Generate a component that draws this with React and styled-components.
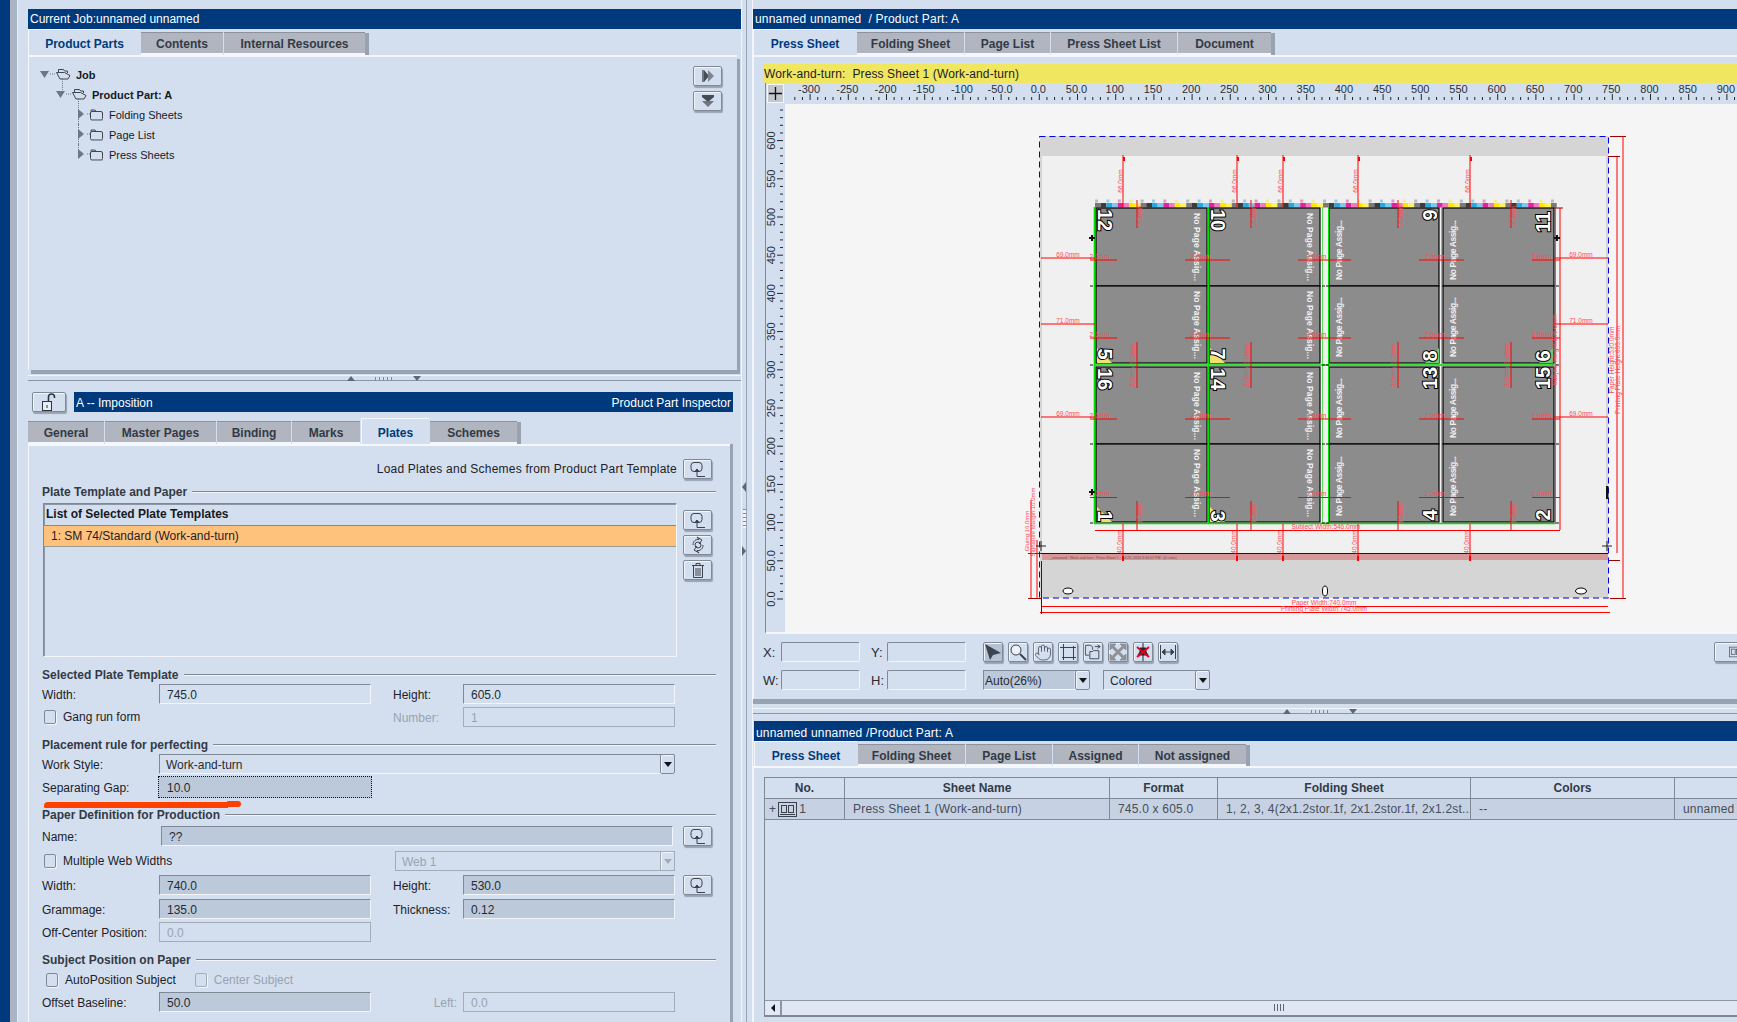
import React from 'react';
import styled, { createGlobalStyle } from 'styled-components';
import { Hand } from 'lucide-react';

const Global = createGlobalStyle`
  html, body { margin: 0; padding: 0; background: #d3dfef; }
  body { font-family: "Liberation Sans", Arial, sans-serif; font-size: 12px; color: #1c2129; }
`;

const Root = styled.div`
  display: flex;
  width: 1737px;
  height: 1022px;
  overflow: hidden;
  background: #d3dfef;
`;
const NavyStrip = styled.div`
  flex: 0 0 10px;
  background: #003a7d;
`;
const GreyStrip = styled.div`
  flex: 0 0 8px;
  box-sizing: border-box;
  background: #aab4c2;
  border-right: 1px solid #e6edf6;
`;
const LeftCol = styled.div`
  flex: 0 0 713px;
  margin-left: 10px;
  padding-top: 9px;
  display: flex;
  flex-direction: column;
`;
const VSplit = styled.div`
  flex: 0 0 12px;
  box-sizing: border-box;
  border-left: 1px solid #f2f6fb;
  border-right: 1px solid #f2f6fb;
  position: relative;
  background: linear-gradient(to right, transparent 4px, #9aa3b0 4px, #9aa3b0 5px, transparent 5px);
`;
const VArrow = styled.div`
  position: absolute;
  left: 0;
  top: ${p => p.$top}px;
  width: 0;
  height: 0;
  border-top: 5px solid transparent;
  border-bottom: 5px solid transparent;
  ${p => p.$right ? 'border-left: 4px solid #5e6875;' : 'border-right: 4px solid #5e6875;'}
`;
const VDots = styled.div`
  position: absolute;
  left: 1px;
  top: 509px;
  width: 3px;
  height: 19px;
  background: repeating-linear-gradient(to bottom, #7f8894 0 1px, #f2f6fb 1px 4px);
`;
const RightCol = styled.div`
  flex: 1;
  min-width: 0;
  padding-top: 9px;
  display: flex;
  flex-direction: column;
`;
const TitleBar = styled.div`
  height: 20px;
  line-height: ${p => p.$lh || 21}px;
  background: #003a7d;
  color: #fff;
  padding: 0 2px;
  flex: ${p => p.$grow ? 1 : 'none'};
  display: flex;
  justify-content: space-between;
  white-space: pre;
  letter-spacing: ${p => p.$ls || 0}px;
  margin-top: ${p => p.$mt || 0}px;
  margin-left: ${p => p.$ml || 0}px;
`;
const TabStrip = styled.div`
  display: flex;
  align-items: flex-end;
  gap: 1px;
  height: ${p => p.$h || 26}px;
  margin-left: ${p => p.$ml || 0}px;
  flex: none;
`;
const Tab = styled.div`
  box-sizing: border-box;
  width: ${p => p.$w}px;
  height: ${p => p.$on ? (p.$short ? 25 : 26) : (p.$short ? 22 : 23)}px;
  line-height: ${p => p.$on ? 28 : 22}px;
  text-align: center;
  font-weight: bold;
  color: ${p => p.$on ? '#003a7d' : '#333a45'};
  background: ${p => p.$on ? '#d3dfef' : '#b0b5bf'};
  border-top: 1px solid ${p => p.$on ? '#f4f7fb' : '#8d939e'};
  ${p => p.$on ? 'border-left: 1px solid #f4f7fb;' : 'border-bottom: 2px solid #f4f7fb;'}
  ${p => p.$last && 'box-shadow: 4px 1px 0 #98a2b0;'}
`;
const Card = styled.div`
  box-sizing: border-box;
  height: ${p => p.$h}px;
  flex: ${p => p.$grow ? 1 : 'none'};
  background: #d3dfef;
  border-top: 2px solid #f4f7fb;
  border-left: 1px solid #f4f7fb;
  margin-right: ${p => p.$mr || 0}px;
  box-shadow: ${p => p.$shadow || '3px 4px 0 #98a2b0'};
  position: relative;
`;
const TreeBox = styled.div`
  padding-top: 7px;
`;
const TreeRow = styled.div`
  display: flex;
  align-items: center;
  height: 20px;
  padding-left: ${p => p.$pad}px;
  font-weight: ${p => p.$bold ? 'bold' : 'normal'};
  font-size: 11px;
  color: #16191f;
  position: relative;
  &::before {
    content: ${p => p.$stem ? '""' : 'none'};
    position: absolute;
    left: ${p => p.$stem}px;
    top: ${p => p.$stemTop ?? -6}px;
    height: ${p => p.$stemH || 20}px;
    border-left: 1px dotted #6f7884;
  }
`;
const TreeLabel = styled.span`
  margin-left: 5px;
  padding-top: 1px;
`;
const SideButtons = styled.div`
  position: absolute;
  right: 15px;
  top: 9px;
  display: flex;
  flex-direction: column;
  gap: 5px;
`;
const IconBtn = styled.button`
  box-sizing: border-box;
  flex: none;
  width: ${p => p.$w || 29}px;
  height: ${p => p.$h || 20}px;
  margin: 0 0 0 ${p => p.$ml || 0}px;
  padding: 0;
  display: flex;
  align-items: center;
  justify-content: center;
  grid-column: ${p => p.$col || 'auto'};
  background: ${p => p.$pressed ? '#b5c2d4' : '#d3dfef'};
  border: 1px solid #808a97;
  border-radius: 2px;
  box-shadow: inset 1px 1px 0 #f2f6fb, 1px 2px 1px #98a2b0;
  color: #3b424c;
`;
const HSplit = styled.div`
  box-sizing: border-box;
  height: 6px;
  margin-top: ${p => p.$mt || 0}px;
  flex: none;
  border-top: 1px solid #f2f6fb;
  border-bottom: 1px solid #8d97a4;
  display: flex;
  align-items: center;
  padding-left: ${p => p.$left}px;
`;
const SplitArrow = styled.span`
  width: 0;
  height: 0;
  border-left: 4px solid transparent;
  border-right: 4px solid transparent;
  ${p => p.$down ? 'border-top: 5px solid #5e6875;' : 'border-bottom: 5px solid #5e6875;'}
`;
const SplitDots = styled.span`
  width: 18px;
  height: 3px;
  margin: 0 20px;
  background: repeating-linear-gradient(to right, #7f8894 0 1px, transparent 1px 4px);
`;
const InspectorHead = styled.div`
  display: flex;
  gap: 8px;
  margin: 11px 8px 0 4px;
  flex: none;
`;
const FormCard = styled(Card)`
  margin-right: 11px;
  padding-left: 13px;
`;
const LoadRow = styled.div`
  display: flex;
  justify-content: flex-end;
  align-items: center;
  gap: 6px;
  margin: 13px 18px 0 0;
  height: 20px;
  line-height: 22px;
  letter-spacing: .22px;
`;
const Heading = styled.div`
  box-sizing: border-box;
  display: flex;
  align-items: center;
  gap: 5px;
  height: 16px;
  padding-top: 2px;
  margin: ${p => p.$mt}px 14px 0 0;
  font-weight: bold;
  color: #333a45;
  white-space: nowrap;
  &::after {
    content: "";
    flex: 1;
    height: 0;
    border-top: 1px solid #7f8894;
    border-bottom: 1px solid #f2f6fb;
  }
`;
const ListArea = styled.div`
  display: flex;
  margin-top: 4px;
  height: 154px;
`;
const PlateList = styled.div`
  box-sizing: border-box;
  width: 634px;
  margin-left: 1px;
  border: 1px solid #f2f6fb;
  border-top: 1px solid #808a97;
  border-left: 1px solid #808a97;
  box-shadow: inset 1px 1px 0 #8d97a4;
`;
const ListHead = styled.div`
  height: 21px;
  line-height: 21px;
  padding-left: 2px;
  font-weight: bold;
  color: #16191f;
  border-bottom: 1px solid #808a97;
`;
const ListItem = styled.div`
  height: 20px;
  line-height: 20px;
  padding-left: 7px;
  background: #ffc27c;
  border-bottom: 1px solid #9a9a90;
`;
const ListTools = styled.div`
  display: flex;
  flex-direction: column;
  gap: 5px;
  margin: 7px 0 0 6px;
`;
const FormGrid = styled.div`
  display: grid;
  grid-template-columns: 117px 212px 22px 70px 212px 8px 29px;
  align-items: center;
  height: ${p => p.$h || 20}px;
  margin-top: ${p => p.$mt || 0}px;
`;
const Label = styled.span`
  color: ${p => p.$off ? '#98a3b1' : '#1c2129'};
  grid-column: ${p => p.$col || 'auto'};
  white-space: nowrap;
  text-align: ${p => p.$end ? 'right' : 'left'};
  padding-right: ${p => p.$end ? 6 : 0}px;
  padding-top: 1px;
`;
const Field = styled.div`
  box-sizing: border-box;
  height: 20px;
  line-height: 21px;
  padding-left: 7px;
  grid-column: ${p => p.$col || 'auto'};
  margin: 0 ${p => p.$inset || 0}px;
  background: ${p => p.$fill ? '#bcc9da' : '#d3dfef'};
  color: ${p => p.$off ? '#98a3b1' : '#262b33'};
  border: 1px solid ${p => p.$off ? '#a3adba' : '#f2f6fb'};
  ${p => !p.$off && 'border-top-color: #808a97; border-left-color: #808a97;'}
`;
const FocusField = styled(Field)`
  height: 22px;
  margin: 0 -1px;
  padding-left: 8px;
  line-height: 23px;
  border: 1px dotted #10131a;
`;
const Select = styled.div`
  box-sizing: border-box;
  display: flex;
  justify-content: space-between;
  height: 20px;
  line-height: 21px;
  padding-left: ${p => p.$pad ?? 6}px;
  grid-column: ${p => p.$col || 'auto'};
  color: ${p => p.$off ? '#98a3b1' : '#262b33'};
  background: ${p => p.$fill ? `linear-gradient(to right, #bcc9da calc(100% - 15px), #d3dfef 0)` : '#d3dfef'};
  width: ${p => p.$w ? p.$w + 'px' : 'auto'};
  margin-left: ${p => p.$ml || 0}px;
  border: 1px solid ${p => p.$off ? '#a3adba' : '#f2f6fb'};
  ${p => !p.$off && 'border-top-color: #808a97; border-left-color: #808a97;'}
  flex: none;
`;
const SelectBtn = styled.span`
  box-sizing: border-box;
  width: 15px;
  margin: -1px -1px -1px 0;
  display: flex;
  align-items: center;
  justify-content: center;
  border: 1px solid ${p => p.$off ? '#a3adba' : '#808a97'};
  border-radius: 2px;
  box-shadow: inset 1px 1px 0 #f2f6fb;
  &::after {
    content: "";
    border-left: 4px solid transparent;
    border-right: 4px solid transparent;
    border-top: 5px solid ${p => p.$off ? '#a3adba' : '#10131a'};
  }
`;
const CheckLine = styled.div`
  display: flex;
  align-items: center;
  grid-column: ${p => p.$col || 'auto'};
  gap: 7px;
  padding-left: ${p => p.$pad ?? 2}px;
  color: ${p => p.$off ? '#98a3b1' : '#1c2129'};
  white-space: nowrap;
  margin-right: ${p => p.$gap || 0}px;
`;
const Box = styled.span`
  box-sizing: border-box;
  width: 12px;
  height: 14px;
  border: 1px solid ${p => p.$off ? '#a3adba' : '#808a97'};
  border-radius: 2px;
  box-shadow: 1px 1px 0 #f2f6fb;
`;
const AutoRow = styled.div`
  display: flex;
  align-items: center;
  height: 20px;
  margin-top: 3px;
`;
const Squiggle = styled.div`
  position: absolute;
  left: 15px;
  top: 356px;
  width: 184px;
  height: 6px;
  background: #ff4000;
  border-radius: 4px 0 0 1px;
  &::after {
    content: "";
    position: absolute;
    right: -13px;
    top: -1px;
    width: 14px;
    height: 6px;
    background: #ff4000;
    border-radius: 1px 4px 4px 1px;
  }
`;

/* right column */
const Inner = styled.div`
  padding: 7px 0 0 9px;
  display: flex;
  flex-direction: column;
`;
const Banner = styled.div`
  height: 19px;
  line-height: 21px;
  background: #f0e660;
  white-space: pre;
  color: #1c2129;
  padding-left: 1px;
  letter-spacing: .12px;
`;
const ViewGrid = styled.div`
  display: grid;
  grid-template-columns: 19px 1fr;
  grid-template-rows: 21px 528px;
  margin-left: 2px;
  border-left: 1px solid #808a97;
  border-bottom: 2px solid #f4f7fb;
`;
const Corner = styled.div`
  margin: 1px;
  border: 1px solid #f4f7fb;
  background: #c4c8ce;
  display: flex;
  align-items: center;
  justify-content: center;
`;
const RulerWrap = styled.div`
  overflow: hidden;
  line-height: 0;
`;
const Canvas = styled.div`
  background: #f5f5f5;
  overflow: hidden;
  line-height: 0;
`;
const ToolRow = styled.div`
  display: flex;
  align-items: center;
  height: 20px;
  margin-top: 8px;
`;
const ToolLabel = styled.span`
  flex: none;
  width: ${p => p.$w}px;
  color: #262b33;
  font-size: 13px;
`;
const ToolField = styled.span`
  box-sizing: border-box;
  flex: none;
  width: 79px;
  height: 20px;
  border: 1px solid #f2f6fb;
  border-top-color: #808a97;
  border-left-color: #808a97;
  border-radius: 2px;
  margin-right: ${p => p.$mr || 0}px;
`;
const ToolIcons = styled.div`
  display: flex;
  flex: none;
  gap: 5px;
`;
const TableWrap = styled.div`
  box-sizing: border-box;
  height: 240px;
  margin: 9px -4px 0 10px;
  border-left: 1px solid #808a97;
  border-top: 1px solid #808a97;
  border-bottom: 2px solid #808a97;
  display: flex;
  flex-direction: column;
`;
const TRow = styled.div`
  display: grid;
  grid-template-columns: 80px 265px 108px 253px 204px 80px;
  height: 20px;
  line-height: 19px;
  flex: none;
  border-bottom: 1px solid #808a97;
  background: ${p => p.$body ? '#c6d2e3' : 'transparent'};
  color: ${p => p.$body ? '#464e5a' : '#333a45'};
  font-weight: ${p => p.$body ? 'normal' : 'bold'};
  letter-spacing: ${p => p.$body ? '.2px' : 0};
`;
const Cell = styled.div`
  box-sizing: border-box;
  border-right: 1px solid #808a97;
  padding-left: ${p => p.$center ? 0 : (p.$pad ?? 8)}px;
  white-space: nowrap;
  overflow: hidden;
  display: flex;
  align-items: center;
  justify-content: ${p => p.$center ? 'center' : 'flex-start'};
  gap: 2px;
`;
const TableSpace = styled.div`
  flex: 1;
`;
const HScroll = styled.div`
  height: 14px;
  flex: none;
  display: flex;
  background: #e0e7f3;
  border-top: 1px solid #8d97a4;
`;
const ScrollArrow = styled.span`
  box-sizing: border-box;
  width: 16px;
  margin-left: 1px;
  background: #e3e9f4;
  border-right: 2px solid #8d97a4;
  display: flex;
  align-items: center;
  justify-content: center;
  &::after {
    content: "";
    border-top: 4px solid transparent;
    border-bottom: 4px solid transparent;
    border-right: 4px solid #10131a;
  }
`;
const Grip = styled.span`
  margin: 3px 0 0 492px;
  width: 11px;
  height: 7px;
  background: repeating-linear-gradient(to right, #5e6875 0 1px, transparent 1px 3px);
`;

/* drawn icons */
const Tri = ({ open }) => (
  <svg width="10" height="10" viewBox="0 0 10 10" style={{ flex: 'none' }}>
    {open
      ? <polygon points="0,2 9,2 4.5,9" fill="#6d7681" />
      : <polygon points="1,0 7,5 1,10" fill="#6d7681" />}
  </svg>
);
const Dotted = ({ w }) => (
  <svg width={w} height="2" style={{ flex: 'none' }}><line x1="0" y1="1" x2={w} y2="1" stroke="#6f7884" strokeDasharray="1 1" /></svg>
);
const OpenFolder = () => (
  <svg width="15" height="12" viewBox="0 0 15 12" fill="none" stroke="#3f4650" style={{ flex: 'none' }}>
    <path d="M2.5 4V1.5h5l1 1.5h3v2" />
    <path d="M.5 4.5h8l5.5 3-2 3.5h-8z" fill="#d3dfef" />
  </svg>
);
const Folder = () => (
  <svg width="14" height="13" viewBox="0 0 14 13" fill="none" stroke="#3f4650" style={{ flex: 'none' }}>
    <path d="M1 3.5V2h4l1 1.5" />
    <rect x=".5" y="3.5" width="12" height="8.5" rx="1.5" />
    <path d="M2 13h11" stroke="#98a2b0" />
  </svg>
);
const LoadIcon = () => (
  <svg width="18" height="17" viewBox="0 0 18 17" fill="none" stroke="#3b424c">
    <rect x="2" y="1.5" width="11" height="9" rx="3" />
    <path d="M8 15.5V8M5.5 11 8 8l2.5 3" fill="#3b424c" />
    <path d="M8 15.5h8" />
  </svg>
);
const SyncIcon = () => (
  <svg width="18" height="18" viewBox="0 0 18 18" fill="none" stroke="#3b424c">
    <path d="M4 9c0-4 3-6 6-5.5L8 1l5 3-3 4" />
    <path d="M14 9c0 4-3 6-6 5.5L10 17l-5-3 3-4" />
    <circle cx="9" cy="9" r="3" />
  </svg>
);
const TrashIcon = () => (
  <svg width="14" height="17" viewBox="0 0 14 17" fill="none" stroke="#3b424c">
    <path d="M1 3.5h12M5 3.5V1.5h4v2M2.5 3.5h9v12h-9zM5 6v8M7 6v8M9 6v8" />
  </svg>
);
const FastIcon = () => (
  <svg width="14" height="14" viewBox="0 0 14 14">
    <path d="M1 1h2v12H1z" fill="#6d7681" />
    <polygon points="3,1 8,7 3,13" fill="#454c56" />
    <polygon points="7,1 13,7 7,13" fill="#7c8591" />
  </svg>
);
const DownIcon = () => (
  <svg width="14" height="14" viewBox="0 0 14 14">
    <path d="M1 1h12v2H1z" fill="#454c56" />
    <polygon points="1,3 13,3 7,8" fill="#454c56" />
    <polygon points="1,7 13,7 7,13" fill="#6d7681" />
  </svg>
);
const LockIcon = () => (
  <svg width="18" height="18" viewBox="0 0 18 18" fill="none" stroke="#2f353d">
    <rect x="2.5" y="8.5" width="9" height="9" fill="#e9eef6" />
    <path d="M7 12v3" />
    <path d="M8.5 8.5V4a3 3 0 0 1 6 0v1" strokeWidth="1.6" />
  </svg>
);
const PointerIcon = () => (
  <svg width="18" height="18" viewBox="0 0 18 18"><polygon points="1,1 17,10 9,12 6,17" fill="#3d444e" /></svg>
);
const ZoomIcon = () => (
  <svg width="18" height="18" viewBox="0 0 18 18" fill="none" stroke="#3b424c">
    <circle cx="7" cy="7" r="5" fill="#eef2f8" />
    <path d="M11 11l6 6" strokeWidth="2" />
  </svg>
);
const CropIcon = () => (
  <svg width="18" height="18" viewBox="0 0 18 18" fill="none" stroke="#3b424c">
    <path d="M1 4.5h16M4.5 1v16M3 14.5h14M14.5 3v14" />
  </svg>
);
const DocsIcon = () => (
  <svg width="20" height="18" viewBox="0 0 20 18" fill="none" stroke="#3b424c">
    <path d="M1.5 1.5h6l2 2v3M1.5 1.5v11h4" />
    <path d="M6.5 8.5h3l1-1h6v9h-10z" fill="#d3dfef" />
    <path d="M12 3h6M15 1l3 2-3 2" />
  </svg>
);
const ExpandIcon = () => (
  <svg width="18" height="18" viewBox="0 0 18 18" fill="none" stroke="#8f9299" strokeWidth="3">
    <path d="M4 4l10 10M14 4L4 14" />
    <path d="M1 1h6L1 7zM17 17h-6l6-6zM17 1h-6l6 6zM1 17h6l-6-6z" fill="#8f9299" strokeWidth="1" />
  </svg>
);
const PinOffIcon = () => (
  <svg width="18" height="18" viewBox="0 0 18 18" fill="none">
    <path d="M9 0v18M4 12h10l-2-3V5H6v4z" stroke="#22262c" fill="#22262c" />
    <path d="M3 4l12 10M15 4L3 14" stroke="#e8001c" strokeWidth="2" />
  </svg>
);
const MeasureIcon = () => (
  <svg width="18" height="14" viewBox="0 0 18 14" fill="none" stroke="#3b424c">
    <path d="M1.5 0v14M16.5 0v14M3 7h12" />
    <path d="M3 7l3-3v6zM15 7l-3-3v6z" fill="#3b424c" />
  </svg>
);
const SheetIcon = () => (
  <svg width="19" height="15" viewBox="0 0 19 15" fill="none" stroke="#3b424c">
    <rect x=".5" y=".5" width="18" height="14" />
    <rect x="3.5" y="3.5" width="5" height="7" />
    <rect x="10.5" y="3.5" width="5" height="7" />
    <path d="M2 12.5h15" />
  </svg>
);
const ViewIcon = () => (
  <svg width="20" height="16" viewBox="0 0 20 16" fill="none" stroke="#3b424c" style={{ marginLeft: 14 }}>
    <rect x=".5" y=".5" width="19" height="15" />
    <rect x="3.5" y="3.5" width="6" height="8" />
    <rect x="11.5" y="3.5" width="6" height="8" />
  </svg>
);
const Plus = () => (
  <svg width="15" height="15" viewBox="0 0 16 16" stroke="#101216" strokeWidth="1.4"><path d="M8 1v14M1 8h14" /></svg>
);

/* rulers and press sheet drawing */
const RED = '#ff0000';
const DIM = '#ff4a5a';
const ORIGIN = 1039.3;
const UNIT = 0.764;

function HRuler() {
  const ticks = [];
  const labels = [];
  for (let v = -320; v <= 920; v += 10) {
    const x = ORIGIN - 785 + v * UNIT;
    const major = v % 50 === 0;
    ticks.push(<line key={v} x1={x} x2={x} y1={major ? 11 : 14} y2={17} stroke="#22262c" />);
    if (major && v >= -300 && v <= 900) {
      const t = v === -50 ? '-50.0' : v === 0 ? '0.0' : v === 50 ? '50.0' : String(v);
      labels.push(<text key={v} x={x - 1} y={10} textAnchor="middle" fontSize="11" fill="#2a2f37">{t}</text>);
    }
  }
  return (
    <svg width="952" height="21" style={{ display: 'block' }} fontFamily="Liberation Sans">
      {ticks}{labels}
    </svg>
  );
}

function VRuler() {
  const ticks = [];
  const labels = [];
  for (let v = 0; v <= 640; v += 10) {
    const y = 599 - v * UNIT - 104;
    const major = v % 50 === 0;
    ticks.push(<line key={v} y1={y} y2={y} x1={major ? 11 : 14} x2={17} stroke="#22262c" />);
    if (major && v <= 600) {
      const t = v === 50 ? '50.0' : v === 0 ? '0.0' : String(v);
      labels.push(<text key={v} transform={`translate(9 ${y}) rotate(-90)`} textAnchor="middle" fontSize="11" fill="#2a2f37">{t}</text>);
    }
  }
  return (
    <svg width="19" height="528" style={{ display: 'block' }} fontFamily="Liberation Sans">
      {ticks}{labels}
    </svg>
  );
}

const COLS = [[1096, 1207], [1209, 1320], [1329, 1439], [1443, 1554]];
const ROWS = [[208, 286], [286, 363], [367, 444], [444, 522]];
const BAR = ['#7a7a7a', '#3c3c3c', '#2aa7e0', '#7ac8ee', '#e0259a', '#f07ac0', '#ffe800', '#fff25c'];

const PAGES = [
  { n: '12', x: 1105, y: 220, c: 0 }, { n: '10', x: 1218, y: 220, c: 1 },
  { n: '9', x: 1430, y: 215, c: 2 }, { n: '11', x: 1543, y: 222, c: 3 },
  { n: '5', x: 1105, y: 354, c: 0 }, { n: '7', x: 1218, y: 354, c: 1 },
  { n: '8', x: 1430, y: 356, c: 2 }, { n: '6', x: 1543, y: 356, c: 3 },
  { n: '16', x: 1105, y: 379, c: 0 }, { n: '14', x: 1218, y: 379, c: 1 },
  { n: '13', x: 1430, y: 378, c: 2 }, { n: '15', x: 1543, y: 378, c: 3 },
  { n: '1', x: 1105, y: 516, c: 0 }, { n: '3', x: 1218, y: 516, c: 1 },
  { n: '4', x: 1430, y: 515, c: 2 }, { n: '2', x: 1543, y: 515, c: 3 },
];

const VLine = ({ x, y1, y2, color = RED, w = 1 }) => <line x1={x} x2={x} y1={y1} y2={y2} stroke={color} strokeWidth={w} />;
const HLine = ({ y, x1, x2, color = RED, w = 1 }) => <line x1={x1} x2={x2} y1={y} y2={y} stroke={color} strokeWidth={w} />;
const DimV = ({ x, y, t, size = 6.5 }) => (
  <text transform={`translate(${x} ${y}) rotate(-90)`} textAnchor="middle" fontSize={size} fill={DIM}>{t}</text>
);
const DimH = ({ x, y, t, size = 6.5 }) => <text x={x} y={y} textAnchor="middle" fontSize={size} fill={DIM}>{t}</text>;

function ColorBar() {
  const out = [];
  for (let i = 0; i * 5.7 < 459; i++) {
    const x = 1095 + i * 5.7;
    const col = BAR[i % 8];
    out.push(<rect key={i} x={x} y={203} width={5.7} height={4.5} fill={col} />);
    if (i % 2 === 0) out.push(<rect key={`t${i}`} x={x} y={199.5} width={3} height={3} fill={col} opacity=".45" />);
  }
  return out;
}

function PressSheet() {
  const topX = [1123, 1237, 1283, 1358, 1470];
  const smallX = [1137, 1251, 1398, 1511];
  const gutterLines = [[1090, 1117], [1185, 1230], [1298, 1351], [1419, 1464], [1532, 1560]];
  return (
    <svg width="952" height="528" viewBox="785 104 952 528" style={{ display: 'block' }} fontFamily="Liberation Sans">
      <rect x="1040" y="136" width="568" height="462" fill="#d5d5d5" />
      <rect x="1042" y="156" width="564" height="397" fill="#f0f0f0" />
      <rect x="1042" y="553" width="566" height="7" fill="#d69898" />
      <HLine y={553.5} x1={1041} x2={1608} color="#0000d0" />
      <text x="1050" y="558.5" fontSize="3.6" fill="#7a4a4a">_unnamed : Work-and-turn : Press Sheet 1 : Jul 23, 2014 3:34:07 PM : (0 color)</text>

      <ColorBar />
      {ROWS.map((r, ri) => COLS.map((c, ci) => (
        <rect key={`${ri}-${ci}`} x={c[0]} y={r[0]} width={c[1] - c[0]} height={r[1] - r[0]} fill="#8c8c8c" stroke="#000" strokeWidth="1.2" />
      )))}
      {[1094, 1208, 1322, 1328, 1441, 1555].map(x => <VLine key={x} x={x + .5} y1={207} y2={524} color={x === 1322 || x === 1441 ? '#58e058' : '#00e000'} w={x === 1094 || x === 1208 ? 1.6 : 1} />)}
      <HLine y={365} x1={1094} x2={1555} color="#00d800" w={1.4} />
      <HLine y={523.5} x1={1094} x2={1555} color="#00e000" w={1.4} />
      {[[1097, 507], [1210, 507], [1097, 348], [1210, 348]].map(([x, y]) => (
        <polygon key={`${x}${y}`} points={`${x},${y} ${x + 15},${y + 15} ${x},${y + 15}`} fill="#efe070" />
      ))}
      {[[1439, 348], [1553, 348]].map(([x, y]) => (
        <polygon key={x} points={`${x},${y} ${x},${y + 15} ${x - 14},${y + 15}`} fill="#70cc70" />
      ))}

      {ROWS.map((r, ri) => COLS.map((c, ci) => {
        const left = ci < 2;
        const x = left ? c[1] - 13.5 : c[0] + 12.5;
        const y = left ? r[0] + 5 : r[1] - 6;
        const len = left ? 68 : 60;
        return (
          <text key={`t${ri}${ci}`} transform={`translate(${x} ${y}) rotate(${left ? 90 : -90})`} fontSize="8.5" fontWeight="bold" fill="#f2f2f2" textLength={len} lengthAdjust="spacing">No Page Assig...</text>
        );
      }))}
      {PAGES.map(p => (
        <text
          key={p.n}
          transform={`translate(${p.x} ${p.y}) rotate(${p.c < 2 ? 90 : -90})`}
          textAnchor="middle"
          dominantBaseline="central"
          fontSize="20"
          fontWeight="bold"
          fill="#fff"
          stroke="#000"
          strokeWidth="2"
          paintOrder="stroke"
        >{p.n}</text>
      ))}

      {topX.map(x => (
        <g key={x}>
          <VLine x={x} y1={155} y2={208} />
          <rect x={x} y={157} width="2" height="4" fill={RED} />
          <DimV x={x} y={181} t="66.0mm" />
          <VLine x={x} y1={524} y2={560} />
          <rect x={x - 1} y={556} width="2" height="5" fill={RED} />
          <DimV x={x - 1} y={542} t="40.0mm" />
        </g>
      ))}
      {smallX.map(x => (
        <g key={x}>
          <VLine x={x} y1={200} y2={228} />
          <DimV x={x + 5} y={216} t="3.0mm" />
          <VLine x={x} y1={342} y2={388} />
          <DimV x={x - 2} y={354} t="3.0mm" />
          <DimV x={x - 2} y={377} t="3.0mm" />
          <VLine x={x} y1={501} y2={530} />
          <DimV x={x + 5} y={514} t="3.0mm" />
        </g>
      ))}
      {[260, 338, 419, 497.5].map(y => gutterLines.map(([a, b]) => (
        <g key={`${y}${a}`}>
          <HLine y={y} x1={a} x2={b} />
          <DimH x={a + (b - a) * .35} y={y - 1.5} t="2.0mm" />
        </g>
      )))}
      {[[258, '69.0mm'], [324, '71.0mm'], [417, '69.0mm']].map(([y, t]) => (
        <g key={y}>
          <HLine y={y} x1={1041} x2={1095} />
          <DimH x={1068} y={y - 1.5} t={t} />
          <HLine y={y} x1={1554} x2={1608} />
          <DimH x={1581} y={y - 1.5} t={t} />
        </g>
      ))}

      <HLine y={530.5} x1={1095} x2={1560} />
      <DimH x={1326} y={528.5} t="Subject Width:546.0mm" />
      <VLine x={1560} y1={208} y2={530} />
      <DimV x={1557} y={350} t="Subject Height:506.0mm" />
      <HLine y={208} x1={1553} x2={1563} color="#a00000" />

      <VLine x={1617} y1={156} y2={553} />
      <VLine x={1623} y1={136} y2={598} />
      <HLine y={136.5} x1={1610} x2={1626} color="#a00000" />
      <HLine y={156.5} x1={1608} x2={1620} color="#a00000" />
      <HLine y={598.5} x1={1610} x2={1626} color="#a00000" />
      <HLine y={560.5} x1={1608} x2={1620} color="#a00000" />
      <DimV x={1614} y={360} t="Paper Height:530.0mm" />
      <DimV x={1620} y={370} t="Printing Plate Height:605.0mm" />

      <HLine y={606.5} x1={1041} x2={1608} />
      <HLine y={612.5} x1={1040} x2={1610} />
      <DimH x={1324} y={604.5} t="Paper Width:740.0mm" />
      <DimH x={1324} y={610.5} t="Printing Plate Width:745.0mm" />

      <VLine x={1031} y1={500} y2={598} />
      <VLine x={1037} y1={540} y2={598} />
      <HLine y={598.5} x1={1028} x2={1041} color="#a00000" />
      <VLine x={1041.5} y1={561} y2={614} color="#7a0000" />
      <HLine y={553.5} x1={1028} x2={1041} color="#d00000" />
      <DimV x={1029} y={531} t="Gluing:16.0mm" size="6" />
      <DimV x={1035} y={522} t="Signature Margin:10.0mm" size="6" />

      <rect x="1039.5" y="136.5" width="569" height="461.5" fill="none" stroke="#0000e0" strokeDasharray="6 4" />

      <ellipse cx="1068" cy="591" rx="5" ry="3" fill="#fff" stroke="#000" />
      <ellipse cx="1325" cy="591" rx="2.5" ry="5" fill="#fff" stroke="#000" />
      <ellipse cx="1581" cy="591" rx="5.5" ry="3" fill="#fff" stroke="#000" />

      {[[1041, 546], [1607, 546]].map(([x, y]) => (
        <path key={x} d={`M${x - 5} ${y}h10M${x} ${y - 5}v10`} stroke="#222" fill="none" />
      ))}
      {[[1092, 238], [1092, 492], [1557, 238]].map(([x, y]) => (
        <path key={`${x}${y}`} d={`M${x - 3} ${y}h6M${x} ${y - 3}v6`} stroke="#111" strokeWidth="2" fill="none" />
      ))}
      <rect x="1606" y="486" width="2.5" height="13" fill="#111" />
      {[286, 365, 444, 523].map(y => (
        <path key={y} d={`M1090 ${y}h3M1556 ${y}h3M1322 ${y}h7`} stroke="#111" fill="none" strokeDasharray="3 1" />
      ))}
    </svg>
  );
}

const TOOLS = [
  [<PointerIcon key="a" />, true], [<ZoomIcon key="b" />], [<Hand key="c" size={19} strokeWidth={1} />],
  [<CropIcon key="d" />], [<DocsIcon key="e" />], [<ExpandIcon key="f" />], [<PinOffIcon key="g" />], [<MeasureIcon key="h" />],
];

export default function App() {
  return (
    <>
      <Global />
      <Root>
        <NavyStrip />
        <GreyStrip />
        <LeftCol>
          <TitleBar>Current Job:unnamed unnamed</TitleBar>
          <TabStrip>
            <Tab $on $w={112}>Product Parts</Tab>
            <Tab $w={82}>Contents</Tab>
            <Tab $w={141} $last>Internal Resources</Tab>
          </TabStrip>
          <Card $h={315} $mr={4}>
            <TreeBox>
              <TreeRow $pad={11} $bold><Tri open /><Dotted w={6} /><OpenFolder /><TreeLabel>Job</TreeLabel></TreeRow>
              <TreeRow $pad={27} $bold $stem={33} $stemTop={-6} $stemH={12}><Tri open /><Dotted w={6} /><OpenFolder /><TreeLabel>Product Part: A</TreeLabel></TreeRow>
              <TreeRow $pad={48} $stem={49} $stemTop={-6} $stemH={26}><Tri /><Dotted w={3} /><Folder /><TreeLabel>Folding Sheets</TreeLabel></TreeRow>
              <TreeRow $pad={48} $stem={49} $stemTop={0} $stemH={20}><Tri /><Dotted w={3} /><Folder /><TreeLabel>Page List</TreeLabel></TreeRow>
              <TreeRow $pad={48} $stem={49} $stemTop={0} $stemH={10}><Tri /><Dotted w={3} /><Folder /><TreeLabel>Press Sheets</TreeLabel></TreeRow>
            </TreeBox>
            <SideButtons>
              <IconBtn aria-label="expand"><FastIcon /></IconBtn>
              <IconBtn aria-label="collapse"><DownIcon /></IconBtn>
            </SideButtons>
          </Card>
          <HSplit $mt={5} $left={319}><SplitArrow /><SplitDots /><SplitArrow $down /></HSplit>
          <InspectorHead>
            <IconBtn $w={34} aria-label="lock"><LockIcon /></IconBtn>
            <TitleBar $grow $lh={22}>
              <span>A -- Imposition</span>
              <span>Product Part Inspector</span>
            </TitleBar>
          </InspectorHead>
          <TabStrip $h={32}>
            <Tab $w={76}>General</Tab>
            <Tab $w={111}>Master Pages</Tab>
            <Tab $w={74}>Binding</Tab>
            <Tab $w={68}>Marks</Tab>
            <Tab $on $w={68}>Plates</Tab>
            <Tab $w={87} $last>Schemes</Tab>
          </TabStrip>
          <FormCard $grow $shadow="3px 0 0 #98a2b0">
            <LoadRow>Load Plates and Schemes from Product Part Template<IconBtn aria-label="load"><LoadIcon /></IconBtn></LoadRow>
            <Heading $mt={4}>Plate Template and Paper</Heading>
            <ListArea>
              <PlateList>
                <ListHead>List of Selected Plate Templates</ListHead>
                <ListItem>1: SM 74/Standard (Work-and-turn)</ListItem>
              </PlateList>
              <ListTools>
                <IconBtn aria-label="load"><LoadIcon /></IconBtn>
                <IconBtn aria-label="swap"><SyncIcon /></IconBtn>
                <IconBtn aria-label="delete"><TrashIcon /></IconBtn>
              </ListTools>
            </ListArea>
            <Heading $mt={9}>Selected Plate Template</Heading>
            <FormGrid $mt={2}>
              <Label>Width:</Label><Field>745.0</Field><Label $col="4">Height:</Label><Field>605.0</Field>
            </FormGrid>
            <FormGrid $mt={3}>
              <CheckLine $col="1 / 3"><Box />Gang run form</CheckLine><Label $col="4" $off>Number:</Label><Field $off>1</Field>
            </FormGrid>
            <Heading $mt={9}>Placement rule for perfecting</Heading>
            <FormGrid $mt={2}>
              <Label>Work Style:</Label>
              <Select $col="2 / 6">Work-and-turn<SelectBtn /></Select>
            </FormGrid>
            <FormGrid $mt={2} $h={22}>
              <Label>Separating Gap:</Label><FocusField $fill>10.0</FocusField>
            </FormGrid>
            <Squiggle />
            <Heading $mt={8}>Paper Definition for Production</Heading>
            <FormGrid $mt={4}>
              <Label>Name:</Label>
              <Field $fill $col="2 / 6" $inset={2}>??</Field>
              <IconBtn $col="7" aria-label="load"><LoadIcon /></IconBtn>
            </FormGrid>
            <FormGrid $mt={5}>
              <CheckLine $col="1 / 3"><Box />Multiple Web Widths</CheckLine>
              <Select $col="4 / 6" $off $ml={2}>Web 1<SelectBtn $off /></Select>
            </FormGrid>
            <FormGrid $mt={4}>
              <Label>Width:</Label><Field $fill>740.0</Field><Label $col="4">Height:</Label><Field $fill>530.0</Field>
              <IconBtn $col="7" aria-label="load"><LoadIcon /></IconBtn>
            </FormGrid>
            <FormGrid $mt={4}>
              <Label>Grammage:</Label><Field $fill>135.0</Field><Label $col="4">Thickness:</Label><Field $fill>0.12</Field>
            </FormGrid>
            <FormGrid $mt={3}>
              <Label>Off-Center Position:</Label><Field $off>0.0</Field>
            </FormGrid>
            <Heading $mt={9}>Subject Position on Paper</Heading>
            <AutoRow>
              <CheckLine $pad={4} $gap={19}><Box />AutoPosition Subject</CheckLine>
              <CheckLine $off $pad={0}><Box $off />Center Subject</CheckLine>
            </AutoRow>
            <FormGrid $mt={2}>
              <Label>Offset Baseline:</Label><Field $fill>50.0</Field><Label $col="4" $off $end>Left:</Label><Field $off>0.0</Field>
            </FormGrid>
          </FormCard>
        </LeftCol>
        <VSplit>
          <VArrow $top={482} />
          <VDots />
          <VArrow $right $top={546} />
        </VSplit>
        <RightCol>
          <TitleBar $ls={.2}>{'unnamed unnamed  / Product Part: A'}</TitleBar>
          <TabStrip>
            <Tab $on $w={103}>Press Sheet</Tab>
            <Tab $w={107}>Folding Sheet</Tab>
            <Tab $w={85}>Page List</Tab>
            <Tab $w={126}>Press Sheet List</Tab>
            <Tab $w={93} $last>Document</Tab>
          </TabStrip>
          <Card $h={644} $shadow="0 5px 0 #98a2b0">
            <Inner>
              <Banner>{'Work-and-turn:  Press Sheet 1 (Work-and-turn)'}</Banner>
              <ViewGrid>
                <Corner><Plus /></Corner>
                <RulerWrap><HRuler /></RulerWrap>
                <RulerWrap><VRuler /></RulerWrap>
                <Canvas><PressSheet /></Canvas>
              </ViewGrid>
              <ToolRow>
                <ToolLabel $w={18}>X:</ToolLabel><ToolField $mr={11} />
                <ToolLabel $w={16}>Y:</ToolLabel><ToolField $mr={17} />
                <ToolIcons>
                  {TOOLS.map(([icon, on], i) => <IconBtn key={i} $w={20} $pressed={on} aria-label="tool">{icon}</IconBtn>)}
                </ToolIcons>
                <IconBtn $ml={536} aria-label="view"><ViewIcon /></IconBtn>
              </ToolRow>
              <ToolRow>
                <ToolLabel $w={18}>W:</ToolLabel><ToolField $mr={11} />
                <ToolLabel $w={16}>H:</ToolLabel><ToolField $mr={17} />
                <Select $w={107} $fill $pad={1}>Auto(26%)<SelectBtn /></Select>
                <Select $w={107} $pad={6} $ml={13}>Colored<SelectBtn /></Select>
              </ToolRow>
            </Inner>
          </Card>
          <HSplit $mt={9} $left={530}><SplitArrow /><SplitDots /><SplitArrow $down /></HSplit>
          <TitleBar $ls={.2} $mt={7} $ml={1} $lh={24}>unnamed unnamed /Product Part: A</TitleBar>
          <TabStrip $ml={1} $h={25}>
            <Tab $on $short $w={103}>Press Sheet</Tab>
            <Tab $short $w={107}>Folding Sheet</Tab>
            <Tab $short $w={86}>Page List</Tab>
            <Tab $short $w={85}>Assigned</Tab>
            <Tab $short $w={107} $last>Not assigned</Tab>
          </TabStrip>
          <Card $grow $shadow="none">
            <TableWrap>
              <TRow>
                <Cell $center>No.</Cell>
                <Cell $center>Sheet Name</Cell>
                <Cell $center>Format</Cell>
                <Cell $center>Folding Sheet</Cell>
                <Cell $center>Colors</Cell>
                <Cell />
              </TRow>
              <TRow $body>
                <Cell $pad={4}>+<SheetIcon />1</Cell>
                <Cell>Press Sheet 1 (Work-and-turn)</Cell>
                <Cell>745.0 x 605.0</Cell>
                <Cell>1, 2, 3, 4(2x1.2stor.1f, 2x1.2stor.1f, 2x1.2st...</Cell>
                <Cell>--</Cell>
                <Cell>unnamed</Cell>
              </TRow>
              <TableSpace />
              <HScroll><ScrollArrow /><Grip /></HScroll>
            </TableWrap>
          </Card>
        </RightCol>
      </Root>
    </>
  );
}
